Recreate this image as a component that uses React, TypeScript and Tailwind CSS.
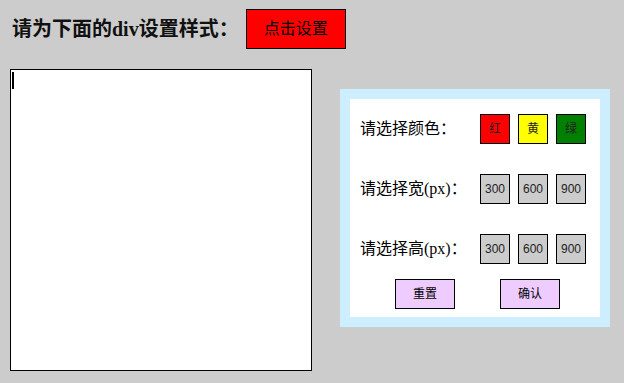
const cjk = "font-['Liberation_Serif','Noto_Sans_CJK_SC',serif]"

function Row({ label, children }: { label: string; children: React.ReactNode }) {
  return (
    <div className="flex items-center h-[30px]">
      <span className={`w-[120px] text-[16px] leading-none text-black ${cjk}`}>{label}</span>
      <div className="flex gap-[8px]">{children}</div>
    </div>
  )
}

function Chip({ bg, children }: { bg: string; children: React.ReactNode }) {
  return (
    <button
      className={`w-[30px] h-[30px] border border-black flex items-center justify-center text-[12px] text-[#222] font-['Liberation_Sans','Noto_Sans_CJK_SC',sans-serif] ${bg}`}
    >
      {children}
    </button>
  )
}

export default function App() {
  return (
    <div className="w-[624px] h-[383px] bg-[#cccccc] overflow-hidden">
      <div className="flex items-center pt-[9px] pl-[12px]">
        <h2 className={`text-[20px] font-bold text-[#111] leading-none ${cjk}`}>
          请为下面的div设置样式：
        </h2>
        <button className="ml-[7px] w-[100px] h-[40px] bg-[#ff0000] border border-black text-[16px] text-black font-['Liberation_Sans','Noto_Sans_CJK_SC',sans-serif]">
          点击设置
        </button>
      </div>

      <div className="flex items-start mt-[20px]">
        <div className="ml-[10px] w-[302px] h-[302px] bg-white border border-black">
          <div className="ml-[1px] mt-[2px] w-[2px] h-[17px] bg-black" />
        </div>

        <div className="ml-[28px] mt-[20px] w-[270px] h-[238px] bg-[#cceeff] p-[10px]">
          <div className="bg-white w-full h-full pt-[15px] pl-[10px] flex flex-col gap-[30px]">
            <Row label="请选择颜色：">
              <Chip bg="bg-[#ff0000]">红</Chip>
              <Chip bg="bg-[#ffff00]">黄</Chip>
              <Chip bg="bg-[#008000]">绿</Chip>
            </Row>
            <Row label="请选择宽(px)：">
              <Chip bg="bg-[#cccccc]">300</Chip>
              <Chip bg="bg-[#cccccc]">600</Chip>
              <Chip bg="bg-[#cccccc]">900</Chip>
            </Row>
            <Row label="请选择高(px)：">
              <Chip bg="bg-[#cccccc]">300</Chip>
              <Chip bg="bg-[#cccccc]">600</Chip>
              <Chip bg="bg-[#cccccc]">900</Chip>
            </Row>
            <div className="flex gap-[45px] pl-[35px] -mt-[15px]">
              <button className="w-[60px] h-[30px] bg-[#eeccff] border border-black text-[12px] text-black font-['Liberation_Sans','Noto_Sans_CJK_SC',sans-serif]">
                重置
              </button>
              <button className="w-[60px] h-[30px] bg-[#eeccff] border border-black text-[12px] text-black font-['Liberation_Sans','Noto_Sans_CJK_SC',sans-serif]">
                确认
              </button>
            </div>
          </div>
        </div>
      </div>
    </div>
  )
}
